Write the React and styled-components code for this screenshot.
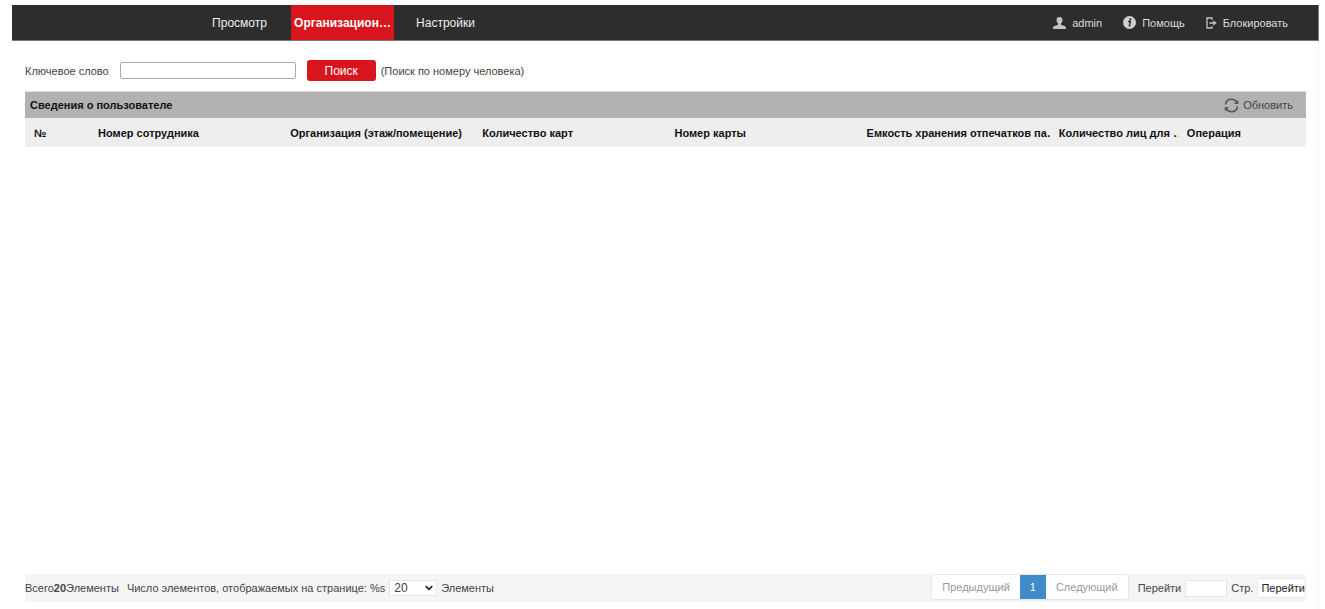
import { useState } from "react";
import styled, { createGlobalStyle } from "styled-components";

const tabs = [
  { id: "view", label: "Просмотр" },
  { id: "org", label: "Организацион…" },
  { id: "settings", label: "Настройки" },
];

const columns = [
  { title: "№", width: 5 },
  { title: "Номер сотрудника", width: 15 },
  { title: "Организация (этаж/помещение)", width: 15 },
  { title: "Количество карт", width: 15 },
  { title: "Номер карты", width: 15 },
  { title: "Емкость хранения отпечатков па…", width: 15 },
  { title: "Количество лиц для …", width: 10 },
  { title: "Операция", width: 10 },
];

const UserIcon = () => (
  <svg width="13" height="12" viewBox="0 0 13 12" fill="#c4c4c4" aria-hidden="true">
    <path d="M6.5 0C4.6 0 3.5 1.3 3.5 3.1c0 1.4.6 2.8 1.6 3.5v1.2L1.4 9.1C.5 9.5 0 10.2 0 12h13c0-1.800-.5-2.500-1.400-2.900L7.900 7.800V6.600c1-.7 1.600-2.100 1.600-3.500C9.500 1.300 8.400 0 6.500 0z" />
  </svg>
);

const InfoIcon = () => (
  <svg width="13" height="13" viewBox="0 0 13 13" aria-hidden="true">
    <circle cx="6.5" cy="6.5" r="6.500" fill="#d0d0d0" />
    <circle cx="7.3" cy="3.3" r="1.100" fill="#2d2d2d" />
    <path d="M5 5.500h2.400L6.400 9.700h1" fill="none" stroke="#2d2d2d" strokeWidth="1.400" />
  </svg>
);

const LogoutIcon = () => (
  <svg width="11" height="12" viewBox="0 0 11 12" fill="none" stroke="#c4c4c4" aria-hidden="true">
    <path d="M6 2.800V1H1v10h5V9.200" strokeWidth="1.300" />
    <path d="M3.500 6H8" strokeWidth="1.500" />
    <path d="M7.300 3.300L10.600 6 7.300 8.700z" fill="#c4c4c4" stroke="none" />
  </svg>
);

const RefreshIcon = () => (
  <svg width="15" height="15" viewBox="0 0 15 15" fill="none" stroke="#555" strokeWidth="1.600" aria-hidden="true">
    <path d="M1.500 6.500C2 3.500 4.500 1.300 7.500 1.300c2.200 0 4 1 5.100 2.700" />
    <path d="M13.500 8.500c-.5 3-3 5.200-6 5.200-2.200 0-4-1-5.100-2.700" />
    <path d="M14.300 1.800V6h-4.200z" fill="#555" stroke="none" />
    <path d="M.7 13.200V9h4.200z" fill="#555" stroke="none" />
  </svg>
);

const App = () => {
  const [active, setActive] = useState("org");
  const [keyword, setKeyword] = useState("");
  const [perPage, setPerPage] = useState("20");
  const [page, setPage] = useState("");

  return (
    <>
      <GlobalStyle />
      <Page>
        <Header>
          <Nav>
            {tabs.map((tab) => (
              <Tab
                key={tab.id}
                type="button"
                $active={active === tab.id}
                onClick={() => setActive(tab.id)}
              >
                {tab.label}
              </Tab>
            ))}
          </Nav>
          <UserMenu>
            <MenuLink href="#user"><UserIcon />admin</MenuLink>
            <MenuLink href="#help"><InfoIcon />Помощь</MenuLink>
            <MenuLink href="#lock"><LogoutIcon />Блокировать</MenuLink>
          </UserMenu>
        </Header>

        <Content>
          <SearchForm onSubmit={(e) => e.preventDefault()}>
            <label htmlFor="keyword">Ключевое слово</label>
            <KeywordInput
              id="keyword"
              type="text"
              value={keyword}
              onChange={(e) => setKeyword(e.target.value)}
            />
            <SearchButton type="submit">Поиск</SearchButton>
            <span>(Поиск по номеру человека)</span>
          </SearchForm>

          <TitleBar>
            <Title>Сведения о пользователе</Title>
            <RefreshButton type="button"><RefreshIcon />Обновить</RefreshButton>
          </TitleBar>
          <Table>
            <thead>
              <tr>
                {columns.map((col) => (
                  <HeadCell key={col.title} scope="col" $width={col.width}>{col.title}</HeadCell>
                ))}
              </tr>
            </thead>
          </Table>

          <Footer>
            <Totals>
              <span>Всего<b>20</b>Элементы</span>
              <PerPage>
                <label htmlFor="perPage">Число элементов, отображаемых на странице: %s</label>
                <SelectBox>
                  <Select id="perPage" value={perPage} onChange={(e) => setPerPage(e.target.value)}>
                    <option value="20">20</option>
                  </Select>
                  <Chevron viewBox="0 0 8 6" aria-hidden="true">
                    <path d="M.8 1.200L4 4.400l3.200-3.200" fill="none" stroke="#222" strokeWidth="1.700" />
                  </Chevron>
                </SelectBox>
                <span>Элементы</span>
              </PerPage>
            </Totals>
            <Pager>
              <PageGroup>
                <PageButton type="button">Предыдущий</PageButton>
                <PageButton type="button" $current>1</PageButton>
                <PageButton type="button">Следующий</PageButton>
              </PageGroup>
              <GoTo>
                <label htmlFor="page">Перейти</label>
                <PageInput id="page" type="text" value={page} onChange={(e) => setPage(e.target.value)} />
                <span>Стр.</span>
                <GoButton type="button">Перейти</GoButton>
              </GoTo>
            </Pager>
          </Footer>
        </Content>
      </Page>
    </>
  );
};

const GlobalStyle = createGlobalStyle`
  * {
    box-sizing: border-box;
  }

  body {
    margin: 0;
    background: #fff;
    color: #444;
    font-family: "Liberation Sans", Arial, sans-serif;
    font-size: 11px;
    line-height: 16px;
  }

  button, input, select {
    font: inherit;
    color: inherit;
    margin: 0;
  }

  button {
    padding: 0;
    border: none;
    background: none;
    white-space: nowrap;
    cursor: pointer;
  }
`;

const Page = styled.div`
  display: flex;
  flex-direction: column;
  min-height: 100vh;
  padding: 5px 6px 0 12px;
`;

const Header = styled.header`
  display: flex;
  justify-content: space-between;
  height: 36px;
  padding: 0 30px 0 176px;
  background: #2d2d2d;
  border-right: 1px solid #777;
  border-bottom: 1px solid #777;
`;

const Nav = styled.nav`
  display: flex;
`;

const Tab = styled.button`
  width: 103px;
  color: ${(props) => (props.$active ? "#fff" : "#eee")};
  background: ${(props) => (props.$active ? "#d8151c" : "transparent")};
  font-size: 12px;
  font-weight: ${(props) => (props.$active ? "bold" : "normal")};
`;

const UserMenu = styled.div`
  display: flex;
  gap: 21px;
`;

const MenuLink = styled.a`
  display: flex;
  align-items: center;
  gap: 6px;
  color: #ddd;
  text-decoration: none;
`;

const Content = styled.main`
  flex: 1;
  display: flex;
  flex-direction: column;
  padding: 0 12px 7px 13px;
  border-right: 1px solid #f2f2f2;
`;

const SearchForm = styled.form`
  display: flex;
  align-items: center;
  height: 50px;
  padding-top: 9px;
`;

const KeywordInput = styled.input`
  width: 176px;
  height: 17px;
  margin: 0 11px;
  padding: 0 4px;
  border: 1px solid #aaa;
  border-radius: 2px;
`;

const SearchButton = styled.button`
  width: 69px;
  height: 21px;
  margin-right: 5px;
  border-radius: 3px;
  color: #fff;
  background: #d8151c;
  font-size: 12px;
`;

const TitleBar = styled.div`
  display: flex;
  align-items: center;
  justify-content: space-between;
  height: 27px;
  padding: 0 13px 0 5px;
  background: #b2b2b2;
  border-top: 1px solid #ddd;
`;

const Title = styled.h2`
  margin: 0;
  color: #111;
  font-size: 11px;
`;

const RefreshButton = styled.button`
  display: flex;
  align-items: center;
  gap: 4px;
`;

const Table = styled.table`
  width: 100%;
  table-layout: fixed;
  border-collapse: collapse;
`;

const HeadCell = styled.th`
  width: ${(props) => props.$width}%;
  height: 29px;
  padding: 0 0 0 9px;
  background: #eee;
  color: #111;
  text-align: left;
  white-space: nowrap;
  overflow: hidden;
`;

const Footer = styled.footer`
  display: flex;
  justify-content: space-between;
  height: 28px;
  margin-top: auto;
  background: #f5f5f5;
`;

const Totals = styled.div`
  display: flex;
  align-items: center;
  gap: 8px;
`;

const PerPage = styled.div`
  display: flex;
  align-items: center;
  gap: 4px;
`;

const SelectBox = styled.div`
  position: relative;
  display: flex;
`;

const Select = styled.select`
  appearance: none;
  width: 48px;
  height: 16px;
  padding: 0 4px;
  border: 1px solid #e6e6e6;
  background: #fff;
  font-size: 12px;
  line-height: 14px;
`;

const Chevron = styled.svg`
  position: absolute;
  top: 5px;
  right: 4px;
  width: 8px;
  height: 6px;
  pointer-events: none;
`;

const Pager = styled.div`
  display: flex;
  gap: 9px;
`;

const PageGroup = styled.div`
  display: flex;
  height: 26px;
  border: 1px solid #e6e6e6;
  border-radius: 3px;
  background: #fff;
`;

const PageButton = styled.button`
  padding: 0 10px;
  color: ${(props) => (props.$current ? "#fff" : "#999")};
  background: ${(props) => (props.$current ? "#428bca" : "transparent")};
`;

const GoTo = styled.div`
  display: flex;
  align-items: center;
  gap: 4px;
`;

const PageInput = styled.input`
  width: 42px;
  height: 17px;
  padding: 0 4px;
  border: 1px solid #e6e6e6;
  background: #fff;
`;

const GoButton = styled.button`
  height: 20px;
  padding: 0 0 0 3px;
  border: 1px solid #e6e6e6;
  border-radius: 3px;
  background: #fff;
  color: #222;
`;

export default App;
